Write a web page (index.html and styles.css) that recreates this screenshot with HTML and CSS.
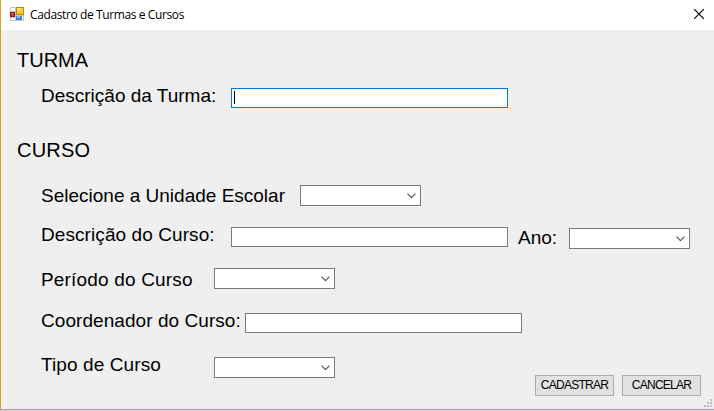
FILE: index.html
```html
<!DOCTYPE html>
<html lang="pt-BR">
<head>
<meta charset="utf-8">
<title>Cadastro de Turmas e Cursos</title>
<link rel="stylesheet" href="styles.css">
</head>
<body>
<div class="window">
  <header class="titlebar">
    <svg class="app-icon" width="14" height="14" viewBox="0 0 14 14" shape-rendering="crispEdges">
      <rect width="14" height="14" fill="#c4c4c4"/>
      <rect x="1" y="1" width="4" height="3" fill="#fff"/>
      <rect x="1" y="11" width="4" height="2" fill="#fff"/>
      <rect x="6" y="0" width="8" height="8" fill="#c08a10"/>
      <rect x="7" y="1" width="6" height="6" fill="#f9c62f"/>
      <rect x="7" y="1" width="4" height="3" fill="#ffe07a"/>
      <rect x="0" y="5" width="5" height="5" fill="#9c1414"/>
      <rect x="1" y="6" width="3" height="3" fill="#cf3a2c"/>
      <rect x="2" y="6" width="1" height="1" fill="#ee9a8c"/>
      <rect x="6" y="9" width="6" height="4" fill="#3b78d8"/>
      <rect x="7" y="9" width="3" height="2" fill="#8fb8f4"/>
      <rect x="12" y="9" width="1" height="4" fill="#fff"/>
    </svg>
    <h1 class="title">Cadastro de Turmas e Cursos</h1>
    <svg class="close" width="10" height="10" viewBox="0 0 10 10"><path d="M0 0L10 10M10 0L0 10" stroke="#000" stroke-width="1.15"/></svg>
  </header>
  <main class="form">
    <h2 class="heading turma">TURMA</h2>
    <div class="row row-turma">
      <label class="label w190">Descrição da Turma:</label>
      <div class="textbox focused"><span class="caret"></span></div>
    </div>
    <h2 class="heading curso">CURSO</h2>
    <div class="row row-unidade">
      <label class="label w259">Selecione a Unidade Escolar</label>
      <div class="combo"><svg class="chevron" width="9" height="6" viewBox="0 0 9 6"><path d="M.5 .7L4.5 4.7L8.5 .7"/></svg></div>
    </div>
    <div class="row row-descricao">
      <label class="label w190">Descrição do Curso:</label>
      <div class="textbox"></div>
      <label class="label ano">Ano:</label>
      <div class="combo"><svg class="chevron" width="9" height="6" viewBox="0 0 9 6"><path d="M.5 .7L4.5 4.7L8.5 .7"/></svg></div>
    </div>
    <div class="row row-periodo">
      <label class="label w173">Período do Curso</label>
      <div class="combo"><svg class="chevron" width="9" height="6" viewBox="0 0 9 6"><path d="M.5 .7L4.5 4.7L8.5 .7"/></svg></div>
    </div>
    <div class="row row-coordenador">
      <label class="label w204">Coordenador do Curso:</label>
      <div class="textbox"></div>
    </div>
    <div class="row row-tipo">
      <label class="label w173">Tipo de Curso</label>
      <div class="combo"><svg class="chevron" width="9" height="6" viewBox="0 0 9 6"><path d="M.5 .7L4.5 4.7L8.5 .7"/></svg></div>
    </div>
    <footer class="actions">
      <button class="button" type="button">CADASTRAR</button>
      <button class="button" type="button">CANCELAR</button>
    </footer>
    <svg class="grip" width="8" height="8" viewBox="0 0 8 8" shape-rendering="crispEdges"><path d="M6 0h2v2h-2zM3 3h2v2h-2zM6 3h2v2h-2zM0 6h2v2h-2zM3 6h2v2h-2zM6 6h2v2h-2z" fill="#bfbfbf"/></svg>
  </main>
</div>
</body>
</html>
```
FILE: styles.css
```css
* { box-sizing: border-box; }
body {
  margin: 0;
  height: 411px;
  overflow: hidden;
  background: #d2d5da;
  color: #000;
  font-family: "Liberation Sans", Arial, sans-serif;
}
.window {
  width: 714px;
  height: 410px;
  display: flex;
  flex-direction: column;
  border-left: 1px solid #e39a26;
  border-bottom: 1px solid #e39a26;
  background: #efefef;
}
.titlebar {
  height: 30px;
  flex: none;
  display: flex;
  align-items: flex-start;
  padding: 7px 10px 0 9px;
  background: #fff;
}
.title {
  margin: 0 auto 0 6px;
  font: 12px/16px "Open Sans", "Noto Sans", sans-serif;
  letter-spacing: -0.39px;
  white-space: nowrap;
}
.close { margin-top: 2px; }
.form {
  position: relative;
  flex: 1;
  min-height: 0;
  display: flex;
  flex-direction: column;
}
.heading {
  margin: 0 0 0 16px;
  height: 24px;
  font-size: 20px;
  font-weight: 400;
  line-height: 24px;
}
.turma { margin-top: 18px; }
.curso { margin-top: 30px; letter-spacing: 0.2px; }
.row {
  display: flex;
  align-items: flex-start;
  height: 24px;
  padding-left: 40px;
}
.label {
  flex: none;
  margin-top: 1px;
  font-size: 19px;
  line-height: 22px;
  white-space: nowrap;
}
.w173 { width: 173px; }
.w190 { width: 190px; }
.w204 { width: 204px; }
.w259 { width: 259px; }
.label.ano { width: 51px; margin: 4px 0 0 10px; letter-spacing: 0; }
.row-turma { margin-top: 12px; }
.row-unidade { margin-top: 22px; }
.row-descricao { margin-top: 15px; letter-spacing: 0.08px; }
.row-periodo { margin-top: 21px; letter-spacing: 0.18px; }
.row-coordenador { margin-top: 17px; letter-spacing: 0.06px; }
.row-tipo { margin-top: 20px; letter-spacing: 0.1px; }
.textbox, .combo {
  flex: none;
  border: 1px solid #7a7a7a;
  background: #fff;
}
.textbox { width: 277px; height: 20px; }
.combo {
  width: 121px;
  height: 21px;
  display: flex;
  justify-content: flex-end;
  padding: 7px 4px 0 0;
}
.chevron { fill: none; stroke: #555; stroke-width: 1.2; }
.focused { border-color: #0078d7; padding: 2px; }
.caret { display: block; width: 1px; height: 13px; background: #000; }
.row-turma .textbox { margin-top: 4px; }
.row-unidade .combo { margin-top: 1px; }
.row-descricao .textbox { margin-top: 4px; }
.row-descricao .combo { margin-top: 5px; }
.row-coordenador .textbox { margin-top: 4px; }
.row-tipo .combo { margin-top: 4px; }
.actions {
  display: flex;
  justify-content: flex-end;
  gap: 8px;
  margin-top: -2px;
  padding-right: 13px;
}
.button {
  width: 79px;
  height: 21px;
  padding: 0;
  border: 1px solid #adadad;
  background: #e1e1e1;
  color: #000;
  font: 12px/19px "Liberation Sans", Arial, sans-serif;
  letter-spacing: -0.75px;
}
.grip { position: absolute; right: 2px; bottom: 2px; }
```
